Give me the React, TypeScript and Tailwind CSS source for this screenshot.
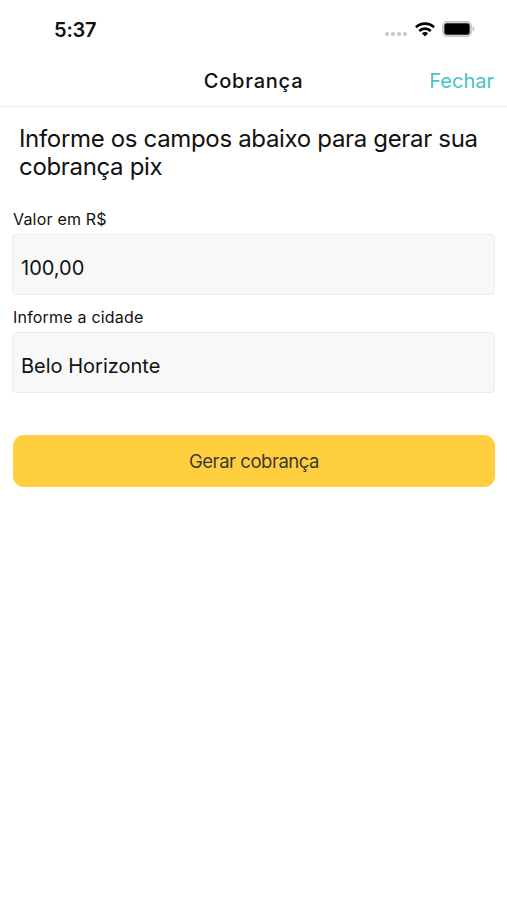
function StatusBar() {
  return (
    <div className="flex h-[56px] items-start justify-between pl-[54px] pr-[32px] pt-[17px]">
      <span className="w-[60px] text-[20px] leading-[26px] font-semibold tracking-[-0.2px] whitespace-nowrap">5:37</span>
      <div className="flex h-[24px] items-center">
        <div className="mt-[9px] mr-[1px] flex gap-[2px]">
          {[0, 1, 2, 3].map((i) => (
            <i key={i} className="size-[4px] rounded-full bg-[#c8c8c8]" />
          ))}
        </div>
        <svg className="ml-[7px] h-[15px] w-[20px]" viewBox="0 0 20 15" fill="none" stroke="#000" strokeWidth="2.7">
          <path d="M1 5.2C6 .4 14 .4 19 5.2M4.2 8.9c3.3-3.1 8.3-3.1 11.6 0" />
          <path d="M10 14.5l-3.1-3.2c1.8-1.6 4.4-1.6 6.2 0z" fill="#000" stroke="none" />
        </svg>
        <svg className="ml-[7px] h-[16px] w-[33px]" viewBox="0 0 33 16">
          <rect x=".9" y=".9" width="28.2" height="14.2" rx="4" fill="#fff" stroke="#c2c2c2" strokeWidth="1.6" />
          <rect x="2.3" y="2.3" width="25.4" height="11.4" rx="2.5" />
          <path d="M30.5 5.5c2.6 1 2.6 4 0 5z" fill="#bcbcbc" />
        </svg>
      </div>
    </div>
  );
}

function Field({ label, value }: { label: string; value: string }) {
  return (
    <label className="flex flex-col">
      <span className="ml-[1px] h-[25px] text-[16px] leading-[20px] tracking-[0.2px]">{label}</span>
      <input className="h-[61px] rounded-[4px] border border-[#ececec] bg-[#f8f8f8] px-[8px] pt-[7px] text-[20px] outline-none" defaultValue={value} />
    </label>
  );
}

export default function App() {
  return (
    <div className="min-h-[900px] bg-white font-['Inter',sans-serif] text-[#111]">
      <StatusBar />
      <header className="grid h-[51px] grid-cols-[1fr_auto_1fr] items-center border-b border-[#ebebeb] px-[13px]">
        <h1 className="col-start-2 text-[20px] font-medium tracking-[0.8px]">Cobrança</h1>
        <button className="justify-self-end text-[20px] text-[#45c4c6]">Fechar</button>
      </header>
      <main className="flex flex-col px-[12px]">
        <h2 className="mt-[18px] ml-[7px] text-[24px] leading-[28px] tracking-[-0.33px] whitespace-nowrap">
          Informe os campos abaixo para gerar sua
          <br />
          cobrança pix
        </h2>
        <div className="mt-[28px] flex flex-col gap-[12px]">
          <Field label="Valor em R$" value="100,00" />
          <Field label="Informe a cidade" value="Belo Horizonte" />
        </div>
        <button className="mt-[42px] ml-[1px] h-[52px] rounded-[11px] bg-[#ffcf3f] pt-[2px] text-[18.5px] tracking-[-0.46px] text-[#3c3a30]">Gerar cobrança</button>
      </main>
    </div>
  );
}
